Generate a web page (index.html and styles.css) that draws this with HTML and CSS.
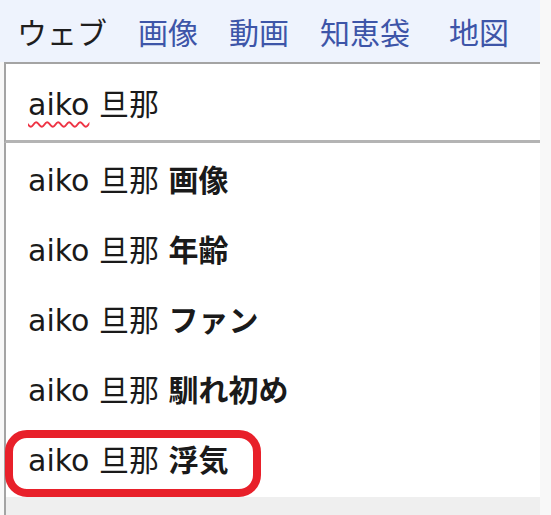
FILE: index.html
```html
<!DOCTYPE html>
<html lang="ja">
<head>
    <meta charset="UTF-8">
    <meta name="viewport" content="width=device-width, initial-scale=1.0">
    <title>aiko 旦那 - 検索</title>
    <link rel="stylesheet" href="styles.css">
</head>
<body>
    <div class="search-panel">
        <nav class="tabs">
            <span class="tab current">ウェブ</span>
            <a class="tab" href="#">画像</a>
            <a class="tab" href="#">動画</a>
            <a class="tab" href="#">知恵袋</a>
            <a class="tab last" href="#">地図</a>
        </nav>
        <div class="search-box">
            <span class="query"><span class="typo">aiko</span> 旦那</span>
        </div>
        <ul class="suggest">
            <li>aiko 旦那 <b>画像</b></li>
            <li>aiko 旦那 <b>年齢</b></li>
            <li>aiko 旦那 <b>ファン</b></li>
            <li>aiko 旦那 <b>馴れ初め</b></li>
            <li class="marked">aiko 旦那 <b>浮気</b></li>
        </ul>
        <div class="suggest-footer"></div>
    </div>
</body>
</html>
```

FILE: styles.css
```css
:root {
  --tab-bg: #eef3fd;
  --link-blue: #3d55a8;
  --frame-gray: #a4a4a4;
  --mark-red: #e8202a;
}

body {
  margin: 0;
  background: #f8f8f8;
  font-family: "DejaVu Sans", "Noto Sans CJK JP", sans-serif;
  color: #1a1a1a;
}

.search-panel {
  width: 540px;
  height: 515px;
  display: flex;
  flex-direction: column;
}

.tabs {
  height: 62px;
  background: var(--tab-bg);
  display: flex;
  align-items: center;
  gap: 31px;
  padding-left: 17px;
  box-sizing: border-box;
  font-family: "Noto Sans CJK JP", sans-serif;
  font-size: 30px;
}

.tab {
  color: var(--link-blue);
  text-decoration: none;
}

.tab.current {
  color: #1e1e1e;
}

.tab.last {
  margin-left: 8px;
}

.search-box {
  margin-left: 4px;
  height: 81px;
  background: #ffffff;
  border-top: 2px solid var(--frame-gray);
  border-left: 2px solid var(--frame-gray);
  border-bottom: 3px solid #b4b4b4;
  box-sizing: border-box;
  display: flex;
  align-items: center;
  padding-left: 22px;
  font-size: 30px;
}

.query {
  white-space: pre;
}

.typo {
  text-decoration: underline wavy #ee3344;
  text-decoration-thickness: 2px;
  text-underline-offset: 6px;
}

.suggest {
  list-style: none;
  margin: 0 0 0 4px;
  padding: 3px 0 1px;
  background: #ffffff;
  border-left: 2px solid var(--frame-gray);
}

.suggest li {
  position: relative;
  height: 70px;
  line-height: 70px;
  padding-left: 22px;
  font-size: 30px;
  white-space: pre;
}

.suggest b {
  font-weight: bold;
}

.suggest li.marked::after {
  content: "";
  position: absolute;
  left: -1px;
  top: 4px;
  width: 256px;
  height: 67px;
  box-sizing: border-box;
  border: 8px solid var(--mark-red);
  border-radius: 22px;
  pointer-events: none;
}

.suggest-footer {
  margin-left: 4px;
  flex: 1;
  background: #efefef;
  border-left: 2px solid var(--frame-gray);
}
```
